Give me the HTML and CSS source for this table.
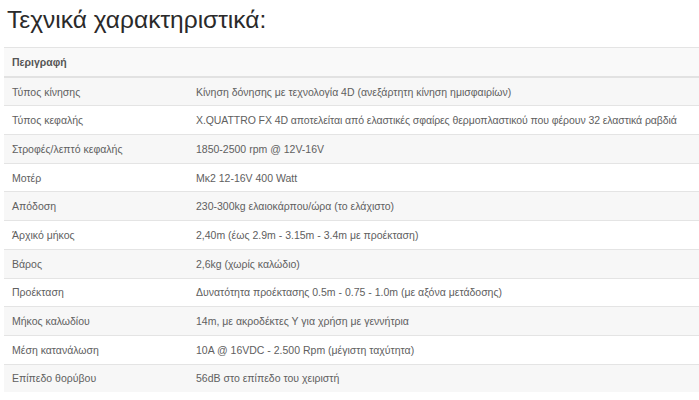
FILE: index.html
```html
<!DOCTYPE html>
<html lang="el">
<head>
<meta charset="utf-8">
<title>Τεχνικά χαρακτηριστικά</title>
<link rel="stylesheet" href="styles.css">
</head>
<body>
<h2 class="title">Τεχνικά χαρακτηριστικά:</h2>
<table class="specs">
<thead>
<tr><th>Περιγραφή</th><th></th></tr>
</thead>
<tbody>
<tr><td>Τύπος κίνησης</td><td>Κίνηση δόνησης με τεχνολογία 4D (ανεξάρτητη κίνηση ημισφαιρίων)</td></tr>
<tr><td>Τύπος κεφαλής</td><td class="tight">X.QUATTRO FX 4D αποτελείται από ελαστικές σφαίρες θερμοπλαστικού που φέρουν 32 ελαστικά ραβδιά</td></tr>
<tr><td>Στροφές/λεπτό κεφαλής</td><td>1850-2500 rpm @ 12V-16V</td></tr>
<tr><td>Μοτέρ</td><td>Mκ2 12-16V 400 Watt</td></tr>
<tr><td>Απόδοση</td><td>230-300kg ελαιοκάρπου/ώρα (το ελάχιστο)</td></tr>
<tr><td>Άρχικό μήκος</td><td>2,40m (έως 2.9m - 3.15m - 3.4m με προέκταση)</td></tr>
<tr><td>Βάρος</td><td>2,6kg (χωρίς καλώδιο)</td></tr>
<tr><td>Προέκταση</td><td>Δυνατότητα προέκτασης 0.5m - 0.75 - 1.0m (με αξόνα μετάδοσης)</td></tr>
<tr><td>Μήκος καλωδίου</td><td>14m, με ακροδέκτες Y για χρήση με γεννήτρια</td></tr>
<tr><td>Μέση κατανάλωση</td><td>10A @ 16VDC - 2.500 Rpm (μέγιστη ταχύτητα)</td></tr>
<tr><td>Επίπεδο θορύβου</td><td>56dB στο επίπεδο του χειριστή</td></tr>
</tbody>
</table>
</body>
</html>
```
FILE: styles.css
```css
html, body {
  margin: 0;
  padding: 0;
  background: #fff;
}
body {
  font-family: "Liberation Sans", Arial, sans-serif;
  color: #606060;
  overflow: hidden;
}
.title {
  margin: 0;
  padding: 5px 0 0 7px;
  height: 47px;
  box-sizing: border-box;
  font-size: 24.5px;
  font-weight: normal;
  color: #2a2a2a;
  line-height: 30px;
}
.specs {
  margin-left: 4px;
  width: 720px;
  border-collapse: collapse;
  font-size: 10.5px;
  border-top: 1px solid #e8e8e8;
}
.specs th, .specs td {
  text-align: left;
  padding: 0 8px;
  height: 27.7px;
  vertical-align: middle;
  border-top: 1px solid #e4e4e4;
}
.specs th:first-child, .specs td:first-child {
  width: 168px;
}
.specs .tight {
  letter-spacing: -0.08px;
}
.specs th {
  font-weight: bold;
  color: #555;
  background: #f9f9f9;
  border-bottom: 2px solid #e2e2e2;
}
.specs tbody tr:nth-child(odd) td {
  background: #f7f7f7;
}
.specs tbody tr:nth-child(even) td {
  background: #fff;
}
```
